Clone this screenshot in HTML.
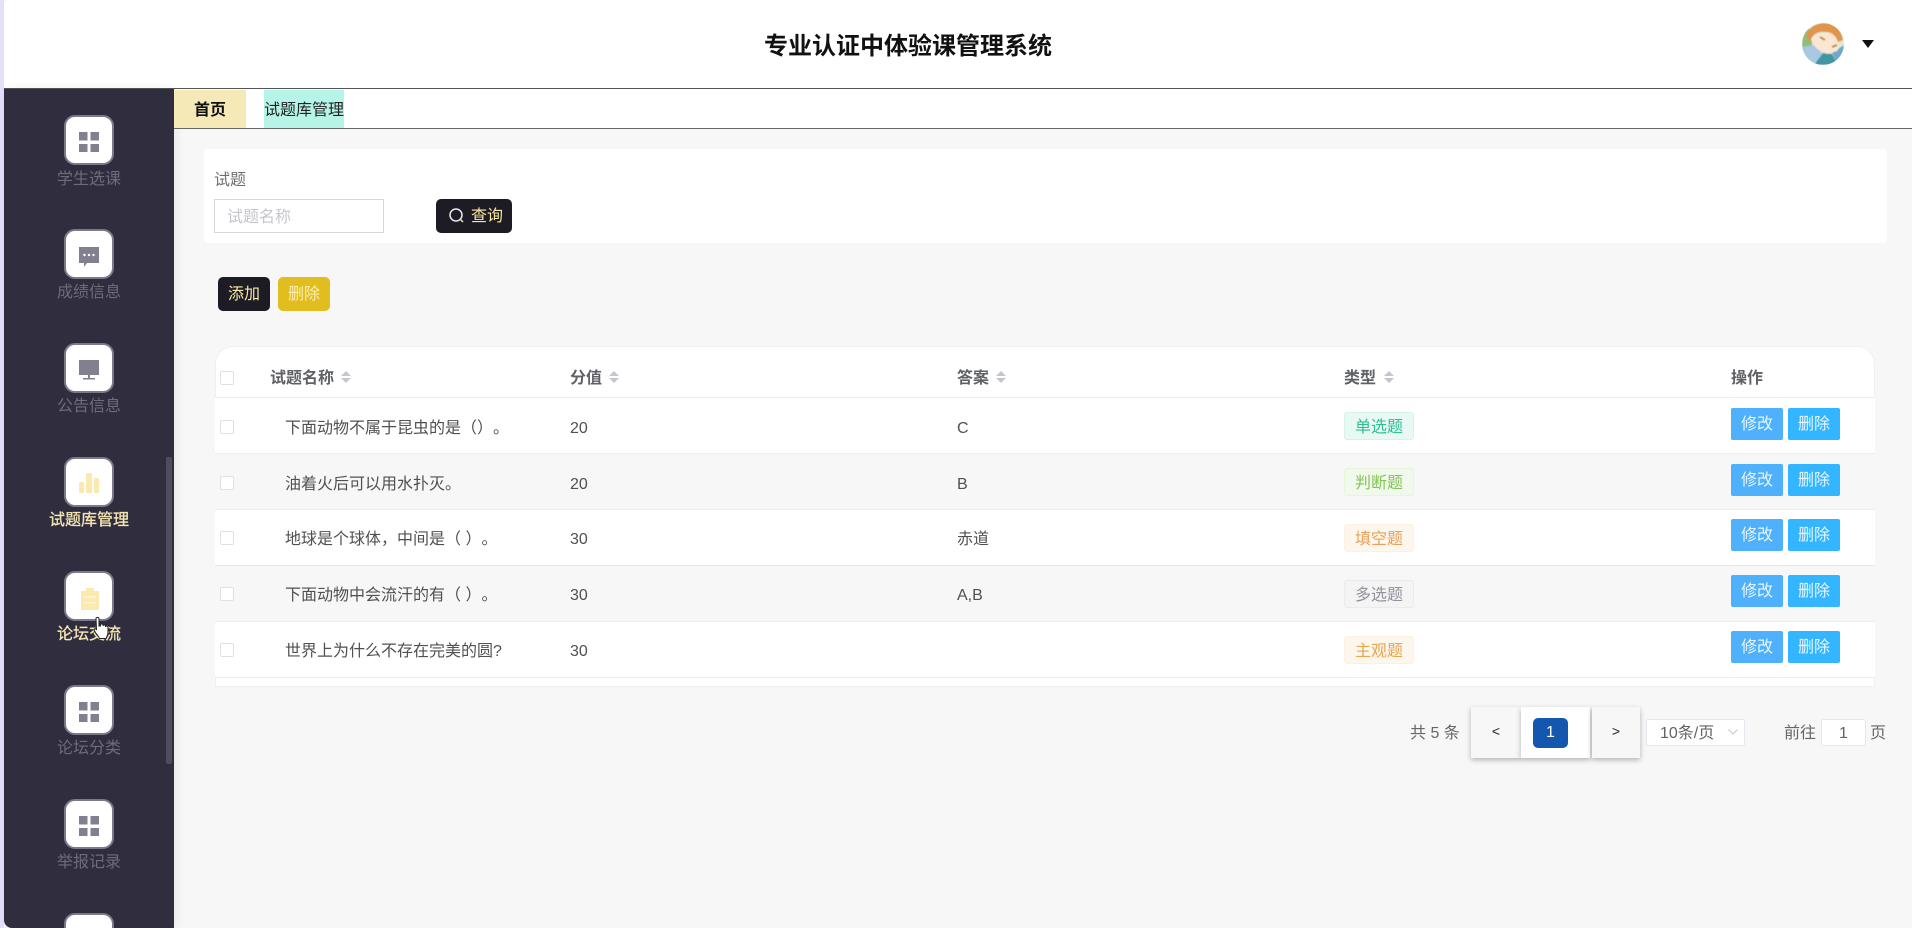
<!DOCTYPE html>
<html lang="zh-CN"><head><meta charset="utf-8"><title>专业认证中体验课管理系统</title>
<style>
*{box-sizing:border-box;margin:0;padding:0;text-spacing-trim:space-all}
html,body{width:1912px;height:928px;overflow:hidden;background:#f7f7f7;font-family:"Liberation Sans","Noto Sans CJK SC",sans-serif;font-size:16px;color:#606266}
#root{position:relative;width:1912px;height:928px;overflow:hidden;background:#f7f7f7}
.a{position:absolute;white-space:nowrap}
.t{position:absolute;white-space:pre;height:24px;line-height:24px;padding-top:2px;color:#505052}
.nb{position:absolute;left:64px;width:50px;height:50px;background:#fff;border:2px solid #7c798b;border-radius:11px}
.nb svg{position:absolute;left:13px;top:15px}
.nl{position:absolute;left:4px;width:170px;text-align:center;line-height:28px;height:28px;color:#6e6b7a}
.y{color:#f4e7b2;-webkit-text-stroke:.3px #f4e7b2}
.cb{position:absolute;left:220px;width:14px;height:14px;background:#fff;border:1px solid #dfe1e6;border-radius:2px}
.row{position:absolute;left:215px;width:1660px;border-bottom:1px solid #ebeef5;background:#fff}
.alt{background:#f7f7f7}
.tag{position:absolute;left:1344px;width:70px;height:28px;line-height:30px;text-align:center;border:1px solid;border-radius:3px}
.btn{position:absolute;width:52px;height:32px;line-height:34px;text-align:center;color:#e8f5ff;border-radius:2px}
.m{left:1731px;background:#4fb0fb}.d{left:1788px;background:#33b6ff}
.t.h{font-weight:bold;color:#5f6165;padding-top:1px}
.dk{position:absolute;background:#1d1c24;color:#f7e8a4;border-radius:5px;text-align:center}
.pg{position:absolute;top:707px;height:51px;background:#f7f7f7;box-shadow:0 2px 5px rgba(0,0,0,.28);color:#222;text-align:center;line-height:49px;font-size:14px}
.t.p{color:#666}
</style></head><body><div id="root">

<div class="a" style="left:0;top:0;width:4px;height:928px;background:#e4e0fa"></div>
<div class="a" style="left:4px;top:0;width:1908px;height:88px;background:#fff;border-radius:6px 0 0 0"></div>
<div class="a" style="left:4px;top:88px;width:1908px;height:1px;background:#555"></div>
<div class="a" style="left:0;top:29px;width:1816px;text-align:center;font-size:24px;font-weight:bold;color:#111;line-height:36px;height:36px">专业认证中体验课管理系统</div>

<svg class="a" style="left:1802px;top:23px" width="42" height="42" viewBox="0 0 42 42">
<defs><clipPath id="c"><circle cx="21" cy="21" r="21"/></clipPath><filter id="bl"><feGaussianBlur stdDeviation="0.6"/></filter></defs>
<g clip-path="url(#c)"><g filter="url(#bl)">
<rect width="42" height="42" fill="#dfe6d8"/>
<rect x="0" y="6" width="10" height="18" fill="#8fbe78"/>
<path d="M0 24 L12 22 L22 32 L14 42 H0Z" fill="#a9c9e2"/>
<path d="M12 42 L21 30 L30 31 L36 42Z" fill="#3f97a3"/>
<path d="M30 30 L42 22 V36 L36 42Z" fill="#6fa8c8"/>
<path d="M9 16 C14 9 26 8 32 12 C37 18 38 25 35 28 L26 31 C18 29 11 24 9 16Z" fill="#fae6d2"/>
<path d="M4 13 C7 3 16 0 24 0 C34 1 40 8 41 17 L36 19 C34 13 30 9 24 9 C18 8 13 10 10 14 L7 19 Z" fill="#e0954c"/>
<path d="M18 14 l5 3 M30 24 l5 -2" stroke="#b9822c" stroke-width="1.8"/>
</g></g></svg>
<svg class="a" style="left:1862px;top:40px" width="12" height="8" viewBox="0 0 12 8"><path d="M0 0H12L6 8Z" fill="#111"/></svg>

<!-- sidebar -->
<div class="a" style="left:4px;top:89px;width:170px;height:839px;background:#302d3f;border-radius:0 0 0 8px;box-shadow:2px 0 10px rgba(0,0,0,.07)"></div>
<div class="a" style="left:166px;top:457px;width:6px;height:307px;background:#4f4c5e;border-radius:2px"></div>

<div class="nb" style="top:115px"><svg width="20" height="20" viewBox="0 0 20 20"><g fill="#82808f"><rect width="8.5" height="8.5"/><rect x="11.5" width="8.5" height="8.5"/><rect y="12" width="8.5" height="8.5"/><rect x="11.5" y="12" width="8.5" height="8.5"/></g></svg></div>
<div class="nl" style="top:166px">学生选课</div>

<div class="nb" style="top:229px"><svg width="20" height="20" viewBox="0 0 20 20" style="top:16px"><path d="M0 0H20V16H8L5 20V16H0Z" fill="#82808f"/><g fill="#fff"><circle cx="5.5" cy="8" r="1.2"/><circle cx="10" cy="8" r="1.2"/><circle cx="14.5" cy="8" r="1.2"/></g></svg></div>
<div class="nl" style="top:279px">成绩信息</div>

<div class="nb" style="top:343px"><svg width="20" height="20" viewBox="0 0 20 20"><rect width="20" height="15" fill="#82808f"/><rect x="9" y="15" width="2" height="3" fill="#82808f"/><rect x="4" y="18" width="12" height="1.5" fill="#82808f"/></svg></div>
<div class="nl" style="top:393px">公告信息</div>

<div class="nb" style="top:457px"><svg width="20" height="20" viewBox="0 0 20 20" style="top:14px"><g fill="#fce9ad"><rect y="9" width="5" height="11" rx="1"/><rect x="7" y="0" width="6" height="20" rx="1.5"/><rect x="15" y="5" width="5" height="15" rx="1"/></g></svg></div>
<div class="nl y" style="top:507px">试题库管理</div>

<div class="nb" style="top:571px"><svg width="20" height="24" viewBox="0 0 20 24" style="top:14px;left:14px"><path d="M1 4H6V1H14V4H19V23H1Z" fill="#fce9ad"/><g fill="#fff6d6"><rect x="4" y="9" width="12" height="1.5"/><rect x="4" y="15" width="12" height="1.5"/></g></svg></div>
<div class="nl y" style="top:621px">论坛交流</div>

<div class="nb" style="top:685px"><svg width="20" height="20" viewBox="0 0 20 20"><g fill="#82808f"><rect width="8.5" height="8.5"/><rect x="11.5" width="8.5" height="8.5"/><rect y="12" width="8.5" height="8.5"/><rect x="11.5" y="12" width="8.5" height="8.5"/></g></svg></div>
<div class="nl" style="top:735px">论坛分类</div>

<div class="nb" style="top:799px"><svg width="20" height="20" viewBox="0 0 20 20"><g fill="#82808f"><rect width="8.5" height="8.5"/><rect x="11.5" width="8.5" height="8.5"/><rect y="12" width="8.5" height="8.5"/><rect x="11.5" y="12" width="8.5" height="8.5"/></g></svg></div>
<div class="nl" style="top:849px">举报记录</div>

<div class="nb" style="top:913px"></div>

<svg class="a" style="left:93px;top:616px;z-index:5" width="18" height="24" viewBox="0 0 18 24"><path d="M3 2 C4 1 6 1 6 3 V10 L7.5 10 V9 C7.5 7.5 10 7.5 10 9 V10 C10 8.5 12.5 8.5 12.5 10 V11 C12.5 9.7 15 9.7 15 11.2 V16 C15 19 14 20 13 22.5 H6.5 C5.5 20 3 18 1.5 15 C.5 13.3 2 12 3 13 L3.5 14 Z" fill="#fff" stroke="#222" stroke-width="1"/></svg>

<!-- tabs -->
<div class="a" style="left:174px;top:89px;width:1738px;height:39px;background:#fff"></div>
<div class="a" style="left:174px;top:128px;width:1738px;height:1px;background:#666"></div>
<div class="a" style="left:174px;top:90px;width:72px;height:38px;line-height:42px;text-align:center;background:#f5e9b8;color:#111;font-weight:bold">首页</div>
<div class="a" style="left:264px;top:90px;width:80px;height:38px;line-height:42px;text-align:center;background:#b5f4e6;color:#222">试题库管理</div>

<!-- search -->
<div class="a" style="left:204px;top:149px;width:1683px;height:94px;background:#fff;border-radius:4px"></div>
<div class="t" style="left:214px;top:167px;color:#707070">试题</div>
<div class="a" style="left:214px;top:199px;width:170px;height:34px;background:#fff;border:1px solid #d8d8d8;line-height:36px;padding-left:12px;color:#c4c6cc">试题名称</div>
<div class="dk" style="left:436px;top:199px;width:76px;height:34px;line-height:36px;padding-left:26px">查询</div>
<svg class="a" style="left:448px;top:207px" width="17" height="17" viewBox="0 0 17 17"><circle cx="8" cy="8" r="6" fill="none" stroke="#e8e8f0" stroke-width="1.5"/><path d="M12 12l3 3" stroke="#f7e8a4" stroke-width="1.5"/></svg>
<div class="dk" style="left:218px;top:277px;width:52px;height:34px;line-height:36px">添加</div>
<div class="a" style="left:278px;top:277px;width:52px;height:34px;line-height:36px;text-align:center;background:#e2bd20;color:#fbeeb0;border-radius:5px">删除</div>

<!-- table -->
<div class="a" style="left:215px;top:346px;width:1660px;height:341px;background:#fff;border:1px solid #eef0f4;border-radius:18px 18px 0 0"></div>
<div class="a" style="left:216px;top:397px;width:1659px;height:1px;background:#ebeef5"></div>
<div class="row" style="top:398px;height:56px"></div>
<div class="row alt" style="top:454px;height:56px"></div>
<div class="row" style="top:510px;height:56px;border-bottom-color:#e6e8ec"></div>
<div class="row alt" style="top:566px;height:56px"></div>
<div class="row" style="top:622px;height:56px"></div>

<div class="cb" style="top:371px"></div>
<div class="t h" style="left:270px;top:366px">试题名称</div>
<svg class="a" style="left:341px;top:371px" width="10" height="12" viewBox="0 0 10 12"><path d="M5 0L10 5H0ZM0 7H10L5 12Z" fill="#c4c6cc"/></svg>
<div class="t h" style="left:570px;top:366px">分值</div>
<svg class="a" style="left:609px;top:371px" width="10" height="12" viewBox="0 0 10 12"><path d="M5 0L10 5H0ZM0 7H10L5 12Z" fill="#c4c6cc"/></svg>
<div class="t h" style="left:957px;top:366px">答案</div>
<svg class="a" style="left:996px;top:371px" width="10" height="12" viewBox="0 0 10 12"><path d="M5 0L10 5H0ZM0 7H10L5 12Z" fill="#c4c6cc"/></svg>
<div class="t h" style="left:1344px;top:366px">类型</div>
<svg class="a" style="left:1384px;top:371px" width="10" height="12" viewBox="0 0 10 12"><path d="M5 0L10 5H0ZM0 7H10L5 12Z" fill="#c4c6cc"/></svg>
<div class="t h" style="left:1731px;top:366px">操作</div>

<div class="cb" style="top:420px"></div>
<div class="t" style="left:285px;top:415px">下面动物不属于昆虫的是（）。</div>
<div class="t" style="left:570px;top:415px">20</div>
<div class="t" style="left:957px;top:415px">C</div>
<div class="tag" style="top:412px;color:#2bbf94;background:#e8f8f3;border-color:#d6f3ea">单选题</div>
<div class="btn m" style="top:408px">修改</div><div class="btn d" style="top:408px">删除</div>

<div class="cb" style="top:476px"></div>
<div class="t" style="left:285px;top:471px">油着火后可以用水扑灭。</div>
<div class="t" style="left:570px;top:471px">20</div>
<div class="t" style="left:957px;top:471px">B</div>
<div class="tag" style="top:468px;color:#85c45a;background:#f0f9eb;border-color:#e6f5dc">判断题</div>
<div class="btn m" style="top:464px">修改</div><div class="btn d" style="top:464px">删除</div>

<div class="cb" style="top:531px"></div>
<div class="t" style="left:285px;top:526px">地球是个球体，中间是（ ）。</div>
<div class="t" style="left:570px;top:526px">30</div>
<div class="t" style="left:957px;top:526px">赤道</div>
<div class="tag" style="top:524px;color:#e6a25c;background:#fdf6ec;border-color:#fbf0e2">填空题</div>
<div class="btn m" style="top:519px">修改</div><div class="btn d" style="top:519px">删除</div>

<div class="cb" style="top:587px"></div>
<div class="t" style="left:285px;top:582px">下面动物中会流汗的有（ ）。</div>
<div class="t" style="left:570px;top:582px">30</div>
<div class="t" style="left:957px;top:582px">A,B</div>
<div class="tag" style="top:580px;color:#909399;background:#f4f4f5;border-color:#ebebed">多选题</div>
<div class="btn m" style="top:575px">修改</div><div class="btn d" style="top:575px">删除</div>

<div class="cb" style="top:643px"></div>
<div class="t" style="left:285px;top:638px">世界上为什么不存在完美的圆?</div>
<div class="t" style="left:570px;top:638px">30</div>
<div class="tag" style="top:636px;color:#e6a550;background:#fdf6ec;border-color:#fbf0e2">主观题</div>
<div class="btn m" style="top:631px">修改</div><div class="btn d" style="top:631px">删除</div>

<!-- pagination -->
<div class="t p" style="left:1410px;top:720px">共 5 条</div>
<div class="pg" style="left:1471px;width:50px">&lt;</div>
<div class="pg" style="left:1521px;width:69px;background:#fff"></div>
<div class="a" style="left:1533px;top:718px;width:35px;height:30px;line-height:30px;text-align:center;background:#1557ae;color:#fff;border-radius:5px;font-size:16px">1</div>
<div class="pg" style="left:1592px;width:48px">&gt;</div>
<div class="a" style="left:1646px;top:719px;width:99px;height:27px;background:#fff;border:1px solid #e4e7ed;border-radius:2px;line-height:27px;padding-left:13px">10条/页</div>
<svg class="a" style="left:1728px;top:729px" width="10" height="6" viewBox="0 0 10 6"><path d="M.5 .5L5 5L9.5 .5" fill="none" stroke="#c4c6cc"/></svg>
<div class="t p" style="left:1784px;top:720px">前往</div>
<div class="a" style="left:1821px;top:719px;width:45px;height:27px;background:#fff;border:1px solid #e4e7ed;border-radius:3px;text-align:center;line-height:27px">1</div>
<div class="t p" style="left:1870px;top:720px">页</div>
</div></body></html>
